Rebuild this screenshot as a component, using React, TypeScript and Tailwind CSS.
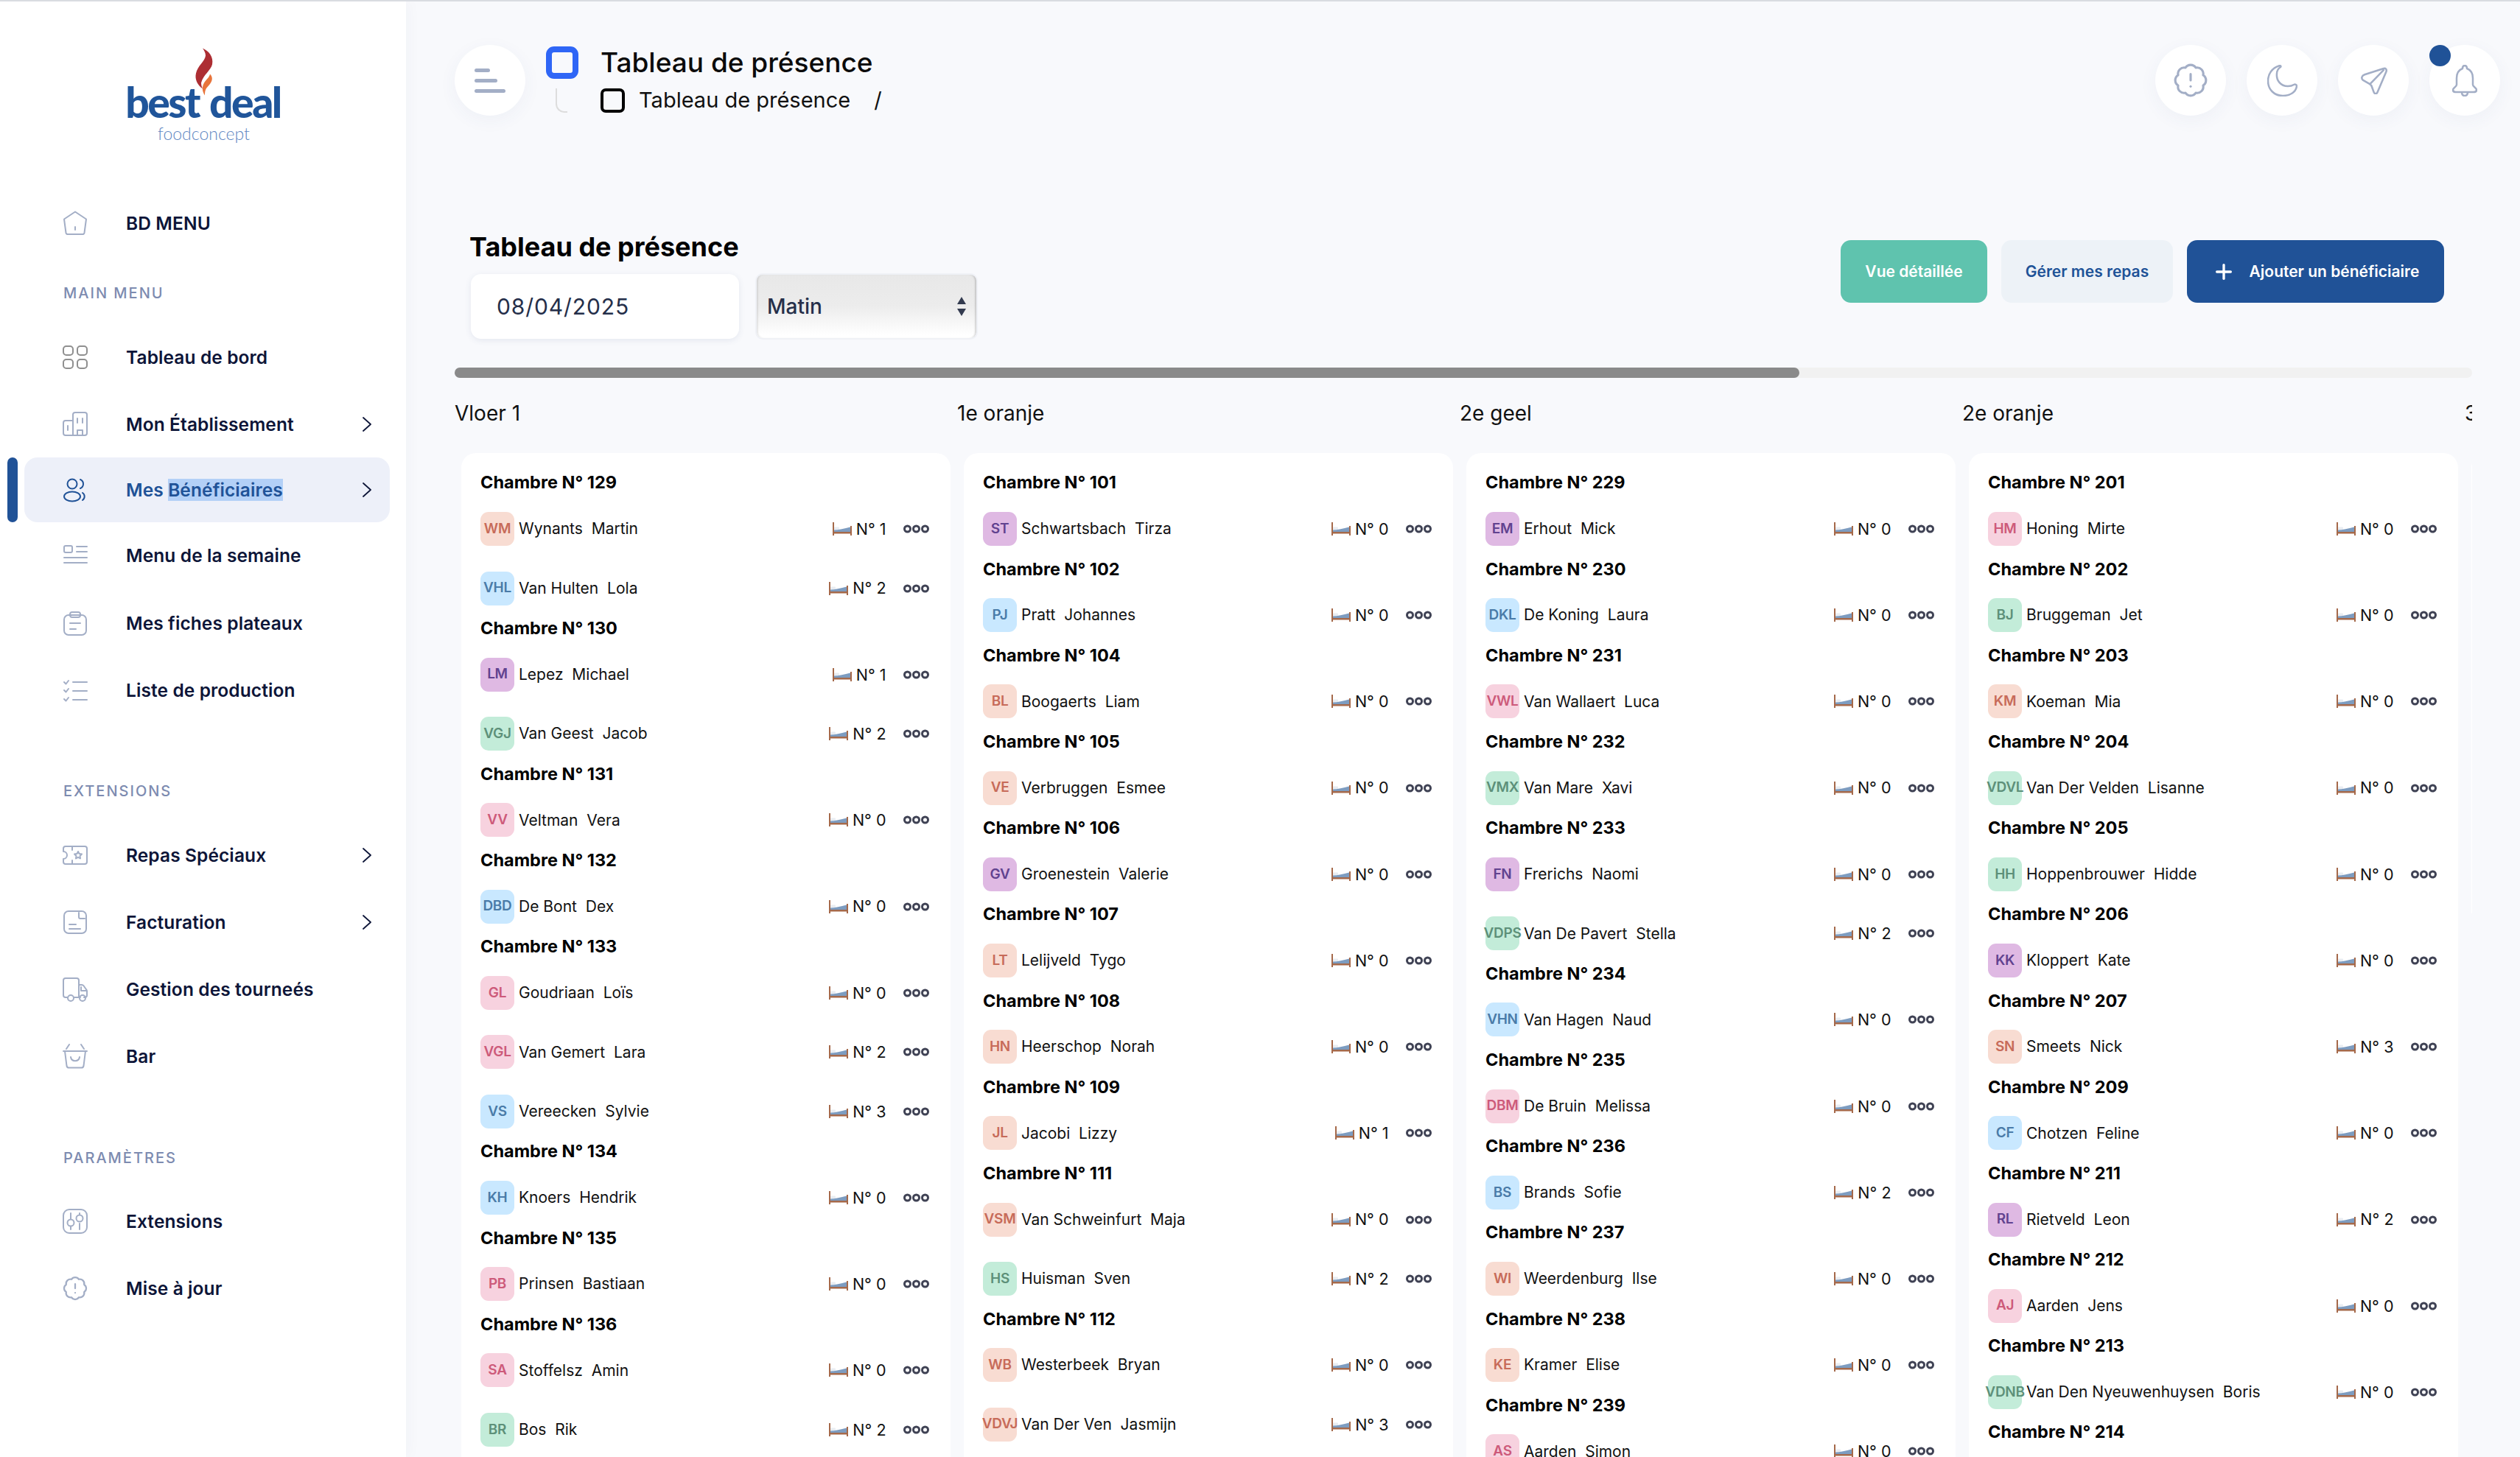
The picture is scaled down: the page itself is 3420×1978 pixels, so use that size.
import { BadgeAlert, Plus } from "lucide-react";
import type { ReactNode } from "react";

type Tone = "peach" | "blue" | "purple" | "green" | "pink";
type Person = [string, string, number, Tone];
type Room = { no: number; people: Person[] };

const tones: Record<Tone, string> = {
  peach: "bg-[#f8dcd2] text-[#c76b59]",
  blue: "bg-[#c9e8ff] text-[#4a7ba8]",
  purple: "bg-[#dfb9e3] text-[#61428f]",
  green: "bg-[#c3ecd9] text-[#5d9079]",
  pink: "bg-[#f7d2df] text-[#cd5a7a]",
};

const columns: { name: string; rooms: Room[] }[] = [
  {
    name: "Vloer 1",
    rooms: [
      { no: 129, people: [["WM", "Wynants  Martin", 1, "peach"], ["VHL", "Van Hulten  Lola", 2, "blue"]] },
      { no: 130, people: [["LM", "Lepez  Michael", 1, "purple"], ["VGJ", "Van Geest  Jacob", 2, "green"]] },
      { no: 131, people: [["VV", "Veltman  Vera", 0, "pink"]] },
      { no: 132, people: [["DBD", "De Bont  Dex", 0, "blue"]] },
      { no: 133, people: [["GL", "Goudriaan  Loïs", 0, "pink"], ["VGL", "Van Gemert  Lara", 2, "pink"], ["VS", "Vereecken  Sylvie", 3, "blue"]] },
      { no: 134, people: [["KH", "Knoers  Hendrik", 0, "blue"]] },
      { no: 135, people: [["PB", "Prinsen  Bastiaan", 0, "pink"]] },
      { no: 136, people: [["SA", "Stoffelsz  Amin", 0, "pink"], ["BR", "Bos  Rik", 2, "green"]] },
    ],
  },
  {
    name: "1e oranje",
    rooms: [
      { no: 101, people: [["ST", "Schwartsbach  Tirza", 0, "purple"]] },
      { no: 102, people: [["PJ", "Pratt  Johannes", 0, "blue"]] },
      { no: 104, people: [["BL", "Boogaerts  Liam", 0, "peach"]] },
      { no: 105, people: [["VE", "Verbruggen  Esmee", 0, "peach"]] },
      { no: 106, people: [["GV", "Groenestein  Valerie", 0, "purple"]] },
      { no: 107, people: [["LT", "Lelijveld  Tygo", 0, "peach"]] },
      { no: 108, people: [["HN", "Heerschop  Norah", 0, "peach"]] },
      { no: 109, people: [["JL", "Jacobi  Lizzy", 1, "peach"]] },
      { no: 111, people: [["VSM", "Van Schweinfurt  Maja", 0, "peach"], ["HS", "Huisman  Sven", 2, "green"]] },
      { no: 112, people: [["WB", "Westerbeek  Bryan", 0, "peach"], ["VDVJ", "Van Der Ven  Jasmijn", 3, "peach"]] },
    ],
  },
  {
    name: "2e geel",
    rooms: [
      { no: 229, people: [["EM", "Erhout  Mick", 0, "purple"]] },
      { no: 230, people: [["DKL", "De Koning  Laura", 0, "blue"]] },
      { no: 231, people: [["VWL", "Van Wallaert  Luca", 0, "pink"]] },
      { no: 232, people: [["VMX", "Van Mare  Xavi", 0, "green"]] },
      { no: 233, people: [["FN", "Frerichs  Naomi", 0, "purple"], ["VDPS", "Van De Pavert  Stella", 2, "green"]] },
      { no: 234, people: [["VHN", "Van Hagen  Naud", 0, "blue"]] },
      { no: 235, people: [["DBM", "De Bruin  Melissa", 0, "pink"]] },
      { no: 236, people: [["BS", "Brands  Sofie", 2, "blue"]] },
      { no: 237, people: [["WI", "Weerdenburg  Ilse", 0, "peach"]] },
      { no: 238, people: [["KE", "Kramer  Elise", 0, "peach"]] },
      { no: 239, people: [["AS", "Aarden  Simon", 0, "pink"]] },
    ],
  },
  {
    name: "2e oranje",
    rooms: [
      { no: 201, people: [["HM", "Honing  Mirte", 0, "pink"]] },
      { no: 202, people: [["BJ", "Bruggeman  Jet", 0, "green"]] },
      { no: 203, people: [["KM", "Koeman  Mia", 0, "peach"]] },
      { no: 204, people: [["VDVL", "Van Der Velden  Lisanne", 0, "green"]] },
      { no: 205, people: [["HH", "Hoppenbrouwer  Hidde", 0, "green"]] },
      { no: 206, people: [["KK", "Kloppert  Kate", 0, "purple"]] },
      { no: 207, people: [["SN", "Smeets  Nick", 3, "peach"]] },
      { no: 209, people: [["CF", "Chotzen  Feline", 0, "blue"]] },
      { no: 211, people: [["RL", "Rietveld  Leon", 2, "purple"]] },
      { no: 212, people: [["AJ", "Aarden  Jens", 0, "pink"]] },
      { no: 213, people: [["VDNB", "Van Den Nyeuwenhuysen  Boris", 0, "green"]] },
      { no: 214, people: [] },
    ],
  },
  { name: "3e geel", rooms: [] },
];

function Ico({ children, tone = "stroke-[#a3aec6]" }: { children: ReactNode; tone?: string }) {
  return (
    <svg
      viewBox="0 0 34 34"
      fill="none"
      strokeWidth="2"
      strokeLinecap="round"
      strokeLinejoin="round"
      className={`h-[34px] w-[34px] shrink-0 ${tone}`}
    >
      {children}
    </svg>
  );
}

const icons: Record<string, ReactNode> = {
  home: <Ico><path d="M17 1.500 32 11.500 29.500 30a2.500 2.500 0 0 1-2.500 2H7a2.500 2.500 0 0 1-2.500-2L2 11.500ZM17 22v4" /></Ico>,
  grid: (
    <Ico tone="stroke-[#8f8f8f]">
      <rect x="1" y="2" width="13" height="12" rx="4" />
      <rect x="20" y="2" width="13" height="12" rx="4" />
      <rect x="1" y="20" width="13" height="12" rx="4" />
      <rect x="20" y="20" width="13" height="12" rx="4" />
    </Ico>
  ),
  building: <Ico><path d="M14 32H4a3 3 0 0 1-3-3V15a3 3 0 0 1 3-3h10M14 32V4a3 3 0 0 1 3-3h13a3 3 0 0 1 3 3v25a3 3 0 0 1-3 3ZM7 19v6M20 9v6M27 9v6M20 32v-7h7v7" /></Ico>,
  users: <Ico tone="stroke-[#205297]"><ellipse cx="13" cy="9" rx="6.500" ry="6.500" /><ellipse cx="13" cy="26" rx="11" ry="6.500" /><path d="M24 3a6.500 6.500 0 0 1 0 12M27 21a6 6 0 0 1 0 10" /></Ico>,
  menu: <Ico><rect x="2" y="4" width="11" height="9" rx="2" /><path d="M19 5h14M19 12h14M2 20h31M2 27h31" /></Ico>,
  tray: <Ico><rect x="2" y="6" width="30" height="27" rx="6" /><rect x="10" y="2" width="14" height="7" rx="3" /><path d="M10 17h14M10 25h8" /></Ico>,
  list: <Ico><path d="m2 6 2.500 2.500L8 4M2 17l2.500 2.500L8 15M2 29l2.500 2.500L8 27M14 6h19M14 18h19M14 30h19" /></Ico>,
  ticket: <Ico><path d="M4 5h26a3 3 0 0 1 3 3v18a3 3 0 0 1-3 3H4a3 3 0 0 1-3-3v-4a5 5 0 0 0 0-10V8a3 3 0 0 1 3-3ZM13 5v5M13 24v5M21 12l1.500 3 3.500.5-2.500 2.500.5 3.500-3-1.700-3 1.700.5-3.500-2.500-2.500 3.500-.5Z" /></Ico>,
  bill: <Ico><rect x="2" y="2" width="30" height="30" rx="6" /><path d="M22 4v6a2 2 0 0 0 2 2h6M9 20h9M9 26h15" /></Ico>,
  truck: <Ico><path d="M6 28H4a3 3 0 0 1-3-3V5a3 3 0 0 1 3-3h15a3 3 0 0 1 3 3v23h-6M22 11h4a3 3 0 0 1 2.500 1.300l3.500 5a3 3 0 0 1 1 2V25a3 3 0 0 1-3 3h-1M22 28h2M25 14v5h7" /><circle cx="11" cy="29" r="4" /><circle cx="27" cy="29" r="4" /></Ico>,
  basket: <Ico><path d="M1 10h32M3 10l2.500 20a3 3 0 0 0 3 2.500h17a3 3 0 0 0 3-2.500L31 10M9 1 5 7M25 1l4 6M11 18c1 7 11 7 12 0" /></Ico>,
  sliders: <Ico><rect x="1" y="1" width="32" height="32" rx="8" /><path d="M11 6v8M11 24v4M23 6v2M23 20v8" /><circle cx="11" cy="19" r="4.500" /><circle cx="23" cy="13" r="4.500" /></Ico>,
};

type NavEntry = { label: string; icon: ReactNode; arrow?: boolean; cls?: string };

function Chevron() {
  return (
    <svg viewBox="0 0 12 20" fill="none" stroke="#0d1538" strokeWidth="1.800" strokeLinecap="round" strokeLinejoin="round" className="h-[20px] w-[12px]">
      <path d="m1 1 10 9-10 9" />
    </svg>
  );
}

function NavRow({ item }: { item: NavEntry }) {
  return (
    <div className={`ml-[33px] flex h-[88px] w-[496px] items-center pl-[52px] pr-[25px] ${item.cls ?? ""}`}>
      {item.icon}
      <span className="ml-[52px] text-[24.500px] font-semibold tracking-[0.100px] text-[#0d1538]">{item.label}</span>
      {item.arrow && <span className="ml-auto flex"><Chevron /></span>}
    </div>
  );
}

function Label({ text, cls }: { text: string; cls: string }) {
  return <div className={`flex h-[30px] items-center pl-[86px] text-[20px] font-medium tracking-[2px] text-[#7d8bb0] ${cls}`}>{text}</div>;
}

function Sidebar() {
  return (
    <aside className="flex w-[551px] shrink-0 flex-col bg-white shadow-[4px_0_18px_rgba(40,60,110,0.03)]">
      <div className="relative h-[257px]">
        <div className="flex justify-center gap-[14px] pt-[103px] text-[57px] font-black leading-[66px] tracking-[-2.500px] text-[#20559a] [font-family:Lato,sans-serif]">
          <span>best</span>
          <span>deal</span>
        </div>
        <div className="-mt-[5px] pl-[2px] text-center text-[23px] font-light leading-[30px] text-[#5e86c2] [font-family:Lato,sans-serif]">foodconcept</div>
        <svg viewBox="0 0 26 65" className="absolute left-[264px] top-[62px] h-[68px] w-[26px]">
          <path fill="#ad2e33" d="M11 0C20 4 26 12 24 22 22 30 12 36 9 47c0 3 1 6 2 8C4 50 0 42 2 34 4 24 14 18 15 10 15 6 13 3 11 0Z" />
          <path fill="#e8743b" d="M21 35c5 5 3 11-3 17-3 3-4 6-4 12-4-6-4-12-1-17 3-5 7-7 8-12Z" />
        </svg>
      </div>
      <NavRow item={{ label: "BD MENU", icon: icons.home }} />
      <Label text="MAIN MENU" cls="mb-[28px] mt-[36px]" />
      <NavRow item={{ label: "Tableau de bord", icon: icons.grid }} />
      <NavRow item={{ label: "Mon Établissement", icon: icons.building, arrow: true, cls: "mt-[3px]" }} />
      <div className="relative mt-px">
        <div className="absolute left-[10px] top-0 h-[88px] w-[14px] rounded-full bg-[#205297]" />
        <div className="ml-[33px] flex h-[88px] w-[496px] items-center rounded-[18px] bg-[#edf0f9] pl-[52px] pr-[25px]">
          {icons.users}
          <span className="ml-[52px] text-[24.500px] font-semibold tracking-[0.100px] text-[#205297]">
            Mes <span className="bg-[#b3d0f7]">Bénéficiaires</span>
          </span>
          <span className="ml-auto flex"><Chevron /></span>
        </div>
      </div>
      <NavRow item={{ label: "Menu de la semaine", icon: icons.menu, cls: "mt-px" }} />
      <NavRow item={{ label: "Mes fiches plateaux", icon: icons.tray, cls: "mt-[4px]" }} />
      <NavRow item={{ label: "Liste de production", icon: icons.list, cls: "mt-[3px]" }} />
      <Label text="EXTENSIONS" cls="mb-[28px] mt-[78px]" />
      <NavRow item={{ label: "Repas Spéciaux", icon: icons.ticket, arrow: true }} />
      <NavRow item={{ label: "Facturation", icon: icons.bill, arrow: true, cls: "mt-[3px]" }} />
      <NavRow item={{ label: "Gestion des tourneés", icon: icons.truck, cls: "mt-[3px]" }} />
      <NavRow item={{ label: "Bar", icon: icons.basket, cls: "mt-[3px]" }} />
      <Label text="PARAMÈTRES" cls="mb-[27px] mt-[79px]" />
      <NavRow item={{ label: "Extensions", icon: icons.sliders }} />
      <NavRow item={{ label: "Mise à jour", icon: <BadgeAlert className="-ml-px -mr-px h-[36px] w-[36px] shrink-0 text-[#a3aec6]" strokeWidth={1.500} />, cls: "mt-[3px]" }} />
    </aside>
  );
}

function RoundBtn({ children, cls }: { children: ReactNode; cls?: string }) {
  return (
    <div className={`flex h-[96px] w-[96px] shrink-0 items-center justify-center rounded-full bg-white shadow-[0_6px_24px_rgba(60,80,130,0.05)] ${cls ?? ""}`}>
      {children}
    </div>
  );
}

function BedIcon() {
  return (
    <svg viewBox="0 0 26 18" className="h-[18px] w-[26px] shrink-0">
      <rect x="0" y="0" width="2" height="18" fill="#a5694a" />
      <rect x="24" y="5" width="2" height="13" fill="#a5694a" />
      <rect x="0" y="13" width="26" height="2.500" fill="#a5694a" />
      <rect x="2" y="6.500" width="7" height="4" rx="1" fill="#e9edf2" />
      <path d="M2 13V10.500C8 10.500 16 8.500 24 6.500V13Z" fill="#7d9cc0" />
    </svg>
  );
}

function DotsIcon() {
  return (
    <svg viewBox="0 0 35 12" fill="none" stroke="#3f4254" strokeWidth="3" className="h-[12px] w-[35px] shrink-0">
      <circle cx="5.500" cy="6" r="4" />
      <circle cx="17.500" cy="6" r="4" />
      <circle cx="29.500" cy="6" r="4" />
    </svg>
  );
}

function PersonRow({ p }: { p: Person }) {
  return (
    <div className="flex h-[46px] items-center">
      <div className={`flex h-[46px] w-[46px] shrink-0 items-center justify-center whitespace-nowrap rounded-[11px] text-[19px] font-semibold tracking-[-0.300px] ${tones[p[3]]}`}>
        {p[0]}
      </div>
      <span className="ml-[6px] whitespace-pre text-[21px] text-[#111]">{p[1]}</span>
      <span className="ml-auto flex items-center gap-[6px] text-[21.500px] text-[#111]">
        <BedIcon />
        N° {p[2]}
      </span>
      <span className="ml-[23px] flex"><DotsIcon /></span>
    </div>
  );
}

function RoomBlock({ room }: { room: Room }) {
  return (
    <div className="pb-[16.200px]">
      <div className="mb-[25px] flex h-[30px] items-center text-[23.500px] font-bold text-black">Chambre N° {room.no}</div>
      <div className="flex flex-col gap-[34.500px]">
        {room.people.map((p) => <PersonRow key={p[0]} p={p} />)}
      </div>
    </div>
  );
}

const topIconCls = "fill-none stroke-[#a3aec6] [stroke-linecap:round] [stroke-linejoin:round] [stroke-width:2.500]";

export default function App() {
  return (
    <div className="flex h-[1978px] w-[3420px] overflow-hidden border-t-2 border-[#d9dce1] bg-[#f8f9fc] [font-family:Inter,sans-serif]">
      <Sidebar />
      <main className="flex min-w-0 flex-1 flex-col pl-[66px] pr-[27px] pt-[59px]">
        <header className="flex h-[96px] shrink-0 items-start">
          <RoundBtn>
            <div className="flex flex-col gap-[9px]">
              <div className="h-[5px] w-[21px] rounded-full bg-[#a3aec6]" />
              <div className="h-[5px] w-[31px] rounded-full bg-[#a3aec6]" />
              <div className="h-[5px] w-[42px] rounded-full bg-[#a3aec6]" />
            </div>
          </RoundBtn>
          <div className="ml-[28px] flex flex-col pt-[2px]">
            <div className="flex h-[44px] items-center">
              <div className="h-[44px] w-[44px] rounded-[11px] border-[8px] border-[#2f66f6]" />
              <span className="ml-[30px] text-[37px] font-medium text-[#0b0b0b]">Tableau de présence</span>
            </div>
            <div className="mt-[12px] flex h-[34px] items-center">
              <div className="ml-[13px] h-[33px] w-[16px] rounded-bl-[12px] border-b-2 border-l-2 border-[#dddddd]" />
              <div className="ml-[45px] h-[33px] w-[33px] rounded-[7px] border-[4px] border-black" />
              <span className="ml-[19px] text-[29px] text-[#111]">Tableau de présence</span>
              <span className="ml-[32px] text-[29px] text-[#111]">/</span>
            </div>
          </div>
          <div className="ml-auto flex gap-[28px]">
            <RoundBtn><BadgeAlert className="h-[50px] w-[50px] text-[#a3aec6]" strokeWidth={1.500} /></RoundBtn>
            <RoundBtn>
              <svg viewBox="0 0 41 43" className={`h-[43px] w-[41px] ${topIconCls}`}>
                <path d="M17 1C6 4 1 13 1 22c0 12 9 20 20 20 10 0 18-5 19-13 0-2-2-3-4-2-3 2-6 2-8 2-10 0-16-8-15-17 0-4 2-7 5-9 1-1 0-2-1-2Z" />
              </svg>
            </RoundBtn>
            <RoundBtn>
              <svg viewBox="0 0 36 36" className={`h-[37px] w-[37px] ${topIconCls}`}>
                <path d="M31 2 6 10c-4 1.500-5 5-2 7.500l8 4.500c2 1 3 2 3.500 4l2.500 7c1 3 4 3 5 0L34.500 6c1-3-1-5-3.500-4ZM31 4 13.500 22" />
              </svg>
            </RoundBtn>
            <RoundBtn cls="relative">
              <svg viewBox="0 0 34 43" className={`h-[43px] w-[34px] ${topIconCls}`}>
                <path d="M17 1c-2 0-3 2-3 4C9 7 6 12 6 18v9c0 3-5 4-5 7 0 2 2 3 4 3h24c2 0 4-1 4-3 0-3-5-4-5-7v-9c0-6-3-11-8-13 0-2-1-4-3-4ZM13 37c0 4 2 5 4 5s4-1 4-5" />
              </svg>
              <div className="absolute left-0 top-0 h-[29px] w-[29px] rounded-full bg-[#205297]" />
            </RoundBtn>
          </div>
        </header>

        <section className="mt-[158px] flex shrink-0 items-start justify-between pl-[20px] pr-[76px]">
          <div>
            <h1 className="flex h-[40px] items-center text-[36px] font-bold text-black">Tableau de présence</h1>
            <div className="ml-[2px] mt-[16px] flex items-center gap-[22px]">
              <div className="flex h-[88px] w-[364px] items-center rounded-[14px] bg-white pl-[35px] text-[30px] tracking-[0.900px] text-[#252f4a] shadow-[0_2px_8px_rgba(60,80,130,0.10)]">08/04/2025</div>
              <div className="flex h-[90px] w-[302px] items-center justify-between rounded-[10px] border-2 border-[#eff1f6] bg-[linear-gradient(#e8e8e8_0%,#ececec_50%,#ffffff_95%)] pl-[14px] pr-[14px] text-[28px] font-medium text-[#252f4a] shadow-[inset_3px_0_3px_-2px_rgba(0,0,0,0.15),inset_-3px_0_3px_-2px_rgba(0,0,0,0.25)]">
                Matin
                <svg viewBox="0 0 12 26" className="h-[26px] w-[12px] fill-[#333b4f]">
                  <path d="M6 0 12 10H0ZM6 26 0 16h12Z" />
                </svg>
              </div>
            </div>
          </div>
          <div className="mt-[11px] flex gap-[19px]">
            <div className="flex h-[85px] w-[199px] items-center justify-center rounded-[14px] bg-[#5fc3ae] text-[21px] font-semibold text-white">Vue détaillée</div>
            <div className="flex h-[85px] w-[233px] items-center justify-center rounded-[14px] bg-[#edf2f7] text-[21px] font-semibold text-[#205297]">Gérer mes repas</div>
            <div className="flex h-[85px] w-[349px] items-center justify-center gap-[19px] rounded-[14px] bg-[#205297] text-[21px] font-semibold text-white">
              <Plus className="h-[32px] w-[32px]" strokeWidth={2.500} />
              Ajouter un bénéficiaire
            </div>
          </div>
        </section>

        <div className="mt-[38px] h-[14px] w-[2738px] shrink-0 rounded-full bg-[#f1f1f1]">
          <div className="h-full w-[1825px] rounded-full bg-[#8a8a8a]" />
        </div>

        <div className="mt-[28px] flex w-[2738px] min-h-0 flex-1 overflow-hidden">
          {columns.map((c) => (
            <div key={c.name} className="w-[682px] shrink-0">
              <div className="flex h-[40px] items-center text-[28px] text-[#111]">{c.name}</div>
              <div className="ml-[9px] mt-[34px] w-[663.500px] rounded-t-[20px] bg-white pb-[600px] pl-[26px] pr-[29px] pt-[25px]">
                {c.rooms.map((r) => <RoomBlock key={r.no} room={r} />)}
              </div>
            </div>
          ))}
        </div>
      </main>
    </div>
  );
}
